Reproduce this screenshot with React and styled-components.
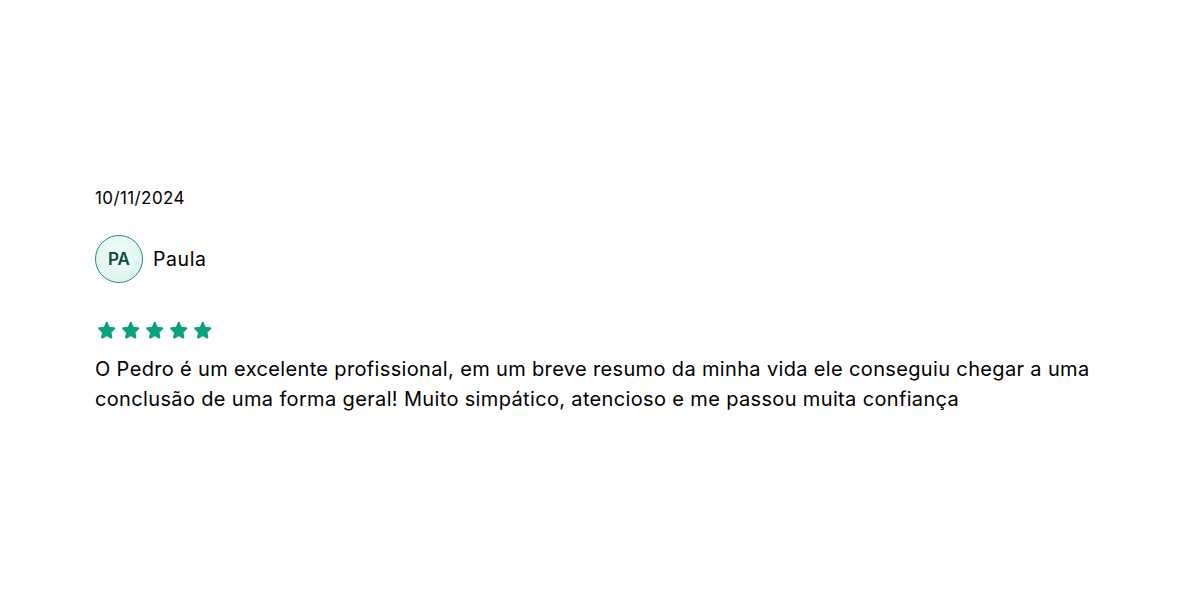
import React from "react";
import styled, { createGlobalStyle } from "styled-components";

const Global = createGlobalStyle`
  html, body { margin: 0; padding: 0; background: #fff; }
  body { font-family: Inter, "Noto Sans", sans-serif; color: #000; }
`;

const Page = styled.div`
  width: 1200px;
  height: 600px;
  box-sizing: border-box;
  padding: 186px 95px 0 95px;
`;

const Card = styled.article`
  display: flex;
  flex-direction: column;
  max-width: 1010px;
`;

const DateText = styled.div`
  font-size: 17px;
  line-height: 24px;
  letter-spacing: 0.4px;
  color: #000;
`;

const Author = styled.div`
  display: flex;
  align-items: center;
  gap: 10px;
  margin-top: 25px;
`;

const Avatar = styled.div`
  width: 46px;
  height: 46px;
  border-radius: 50%;
  border: 1px solid #2f8a72;
  background: radial-gradient(circle at 50% 40%, #f2fcf9 0%, #d6f2ea 100%);
  display: flex;
  align-items: center;
  justify-content: center;
  font-size: 17px;
  font-weight: 600;
  color: #0b4a3c;
`;

const Name = styled.span`
  font-size: 19.5px;
  letter-spacing: 0.6px;
  color: #000;
`;

const Stars = styled.div`
  display: flex;
  gap: 6px;
  margin-top: 38px;
  padding-left: 3px;
`;

const Body = styled.p`
  margin: 15px 0 0;
  font-size: 20px;
  line-height: 30px;
  letter-spacing: 0.35px;
  color: #000;
`;

const Star = () => (
  <svg width="18" height="18" viewBox="0 0 24 24">
    <path
      d="M12 2.2l2.9 6.1 6.6.8c.7.1 1 1 .5 1.5l-4.9 4.5 1.3 6.6c.1.7-.6 1.2-1.2.9L12 19.3l-5.9 3.3c-.6.3-1.4-.2-1.2-.9l1.3-6.6-4.9-4.5c-.5-.5-.2-1.4.5-1.5l6.6-.8L11.1 2.2c.3-.6 1.2-.6 1.5 0z"
      fill="#0aa07e"
      stroke="#0aa07e"
      strokeWidth="1.5"
      strokeLinejoin="round"
    />
  </svg>
);

export default function App() {
  return (
    <>
      <Global />
      <Page>
        <Card>
          <DateText>10/11/2024</DateText>
          <Author>
            <Avatar>PA</Avatar>
            <Name>Paula</Name>
          </Author>
          <Stars>
            {[0, 1, 2, 3, 4].map((i) => (
              <Star key={i} />
            ))}
          </Stars>
          <Body>
            O Pedro é um excelente profissional, em um breve resumo da minha vida ele conseguiu chegar a uma conclusão de uma forma geral! Muito simpático, atencioso e me passou muita confiança
          </Body>
        </Card>
      </Page>
    </>
  );
}
